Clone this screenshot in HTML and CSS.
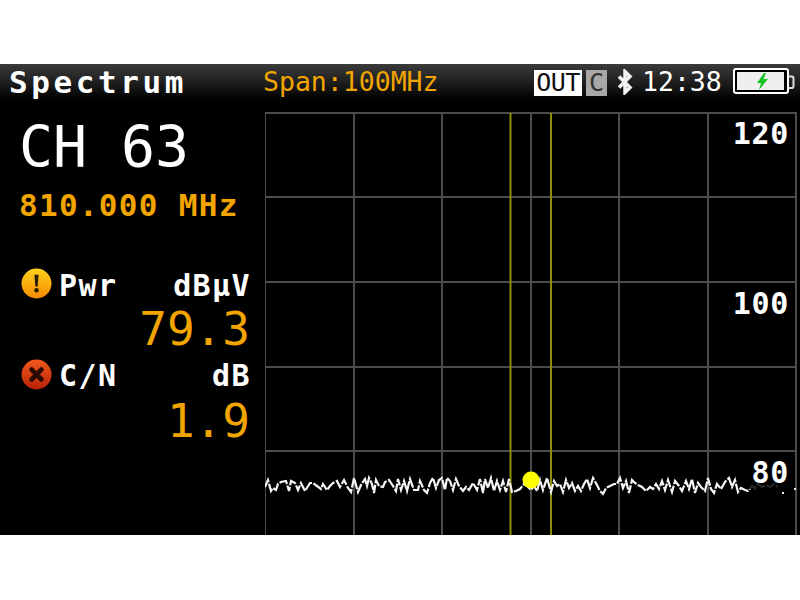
FILE: index.html
```html
<!DOCTYPE html>
<html lang="en">
<head>
  <meta charset="UTF-8">
  <title>Spectrum</title>
  <link rel="stylesheet" href="styles.css">
</head>
<body>
  <div class="screen">
    <div class="topbar">
      <div class="mode">Spectrum</div>
      <div class="span">Span:100MHz</div>
      <div class="status">
        <span class="badge badge-out">OUT</span>
        <span class="badge badge-c">C</span>
        <svg class="bt-icon" width="16" height="26" viewBox="0 0 16 26">
          <path d="M2 7.500 L13 18.500 L8 23.500 V2.500 L13 7.500 L2 18.500" fill="none" stroke="#f2f2f2" stroke-width="3.500"/>
        </svg>
        <span class="clock">12:38</span>
        <svg class="battery" width="62" height="27" viewBox="0 0 62 27">
          <rect x="1" y="1" width="54" height="24" rx="2" fill="#000" stroke="#fff" stroke-width="2"/>
          <rect x="4" y="4" width="47" height="18" fill="#efefef"/>
          <path d="M56 8.500 H59 Q60.500 8.500 60.500 10.500 V18 Q60.500 20 59 20 H56" fill="none" stroke="#ddd" stroke-width="2"/>
          <path d="M31 5 L24 15 H28 L26 22 L35 11 H30.500 L33 5 Z" fill="#18c422"/>
        </svg>
      </div>
    </div>

    <div class="main">
      <div class="readout">
        <div class="channel">CH 63</div>
        <div class="freq">810.000 MHz</div>

        <div class="measure measure-pwr">
          <svg class="state-icon" width="31" height="31" viewBox="0 0 32 32">
            <defs>
              <linearGradient id="warnFill" x1="0" y1="0" x2="0" y2="1">
                <stop offset="0" stop-color="#ffd21c"/>
                <stop offset="1" stop-color="#f58a04"/>
              </linearGradient>
            </defs>
            <circle cx="16" cy="16" r="15.500" fill="url(#warnFill)"/>
            <path d="M13.800 7 H18.200 L17.200 19 H14.800 Z" fill="#2a1c00"/>
            <circle cx="16" cy="23" r="2.300" fill="#2a1c00"/>
          </svg>
          <span class="measure-name">Pwr</span>
          <span class="measure-unit">dBµV</span>
        </div>
        <div class="measure-value">79.3</div>

        <div class="measure measure-cn">
          <svg class="state-icon" width="31" height="31" viewBox="0 0 32 32">
            <defs>
              <linearGradient id="errFill" x1="0" y1="0" x2="0" y2="1">
                <stop offset="0" stop-color="#f25a1c"/>
                <stop offset="1" stop-color="#b82008"/>
              </linearGradient>
            </defs>
            <circle cx="16" cy="16" r="15.500" fill="url(#errFill)"/>
            <path d="M11 11 L21 21 M21 11 L11 21" stroke="#2a0a04" stroke-width="5" stroke-linecap="round"/>
          </svg>
          <span class="measure-name">C/N</span>
          <span class="measure-unit">dB</span>
        </div>
        <div class="measure-value">1.9</div>
      </div>

      <div class="chart">
        <svg class="plot" width="535" height="435" viewBox="265 100 535 435">
          <g stroke="#4c4c4c" stroke-width="2" fill="none">
            <path d="M265 535 V113 H797"/>
            <path d="M354 113 V535 M442 113 V535 M531 113 V535 M619 113 V535 M708 113 V535 M796 113 V535"/>
            <path d="M265 197 H797 M265 282 H797 M265 367 H797 M265 451 H797"/>
          </g>
          <path d="M510.500 113 V535 M551 113 V535" stroke="#8f8c00" stroke-width="2"/>
          <polyline class="trace" points="265,487 268,480 271,491 273,488 276,490 278,484 281,482 286,481 289,491 291,481 295,483 298,490 301,483 305,491 310,483 313,483 317,486 321,489 323,484 327,490 330,486 333,483 337,481 340,487 344,480 348,488 351,492 354,478 358,492 361,485 365,479 367,486 369,478 372,484 374,493 376,480 379,486 383,487 385,482 389,480 393,486 396,491 398,479 401,490 404,481 407,491 410,479 414,490 418,490 420,481 424,490 427,493 430,483 433,478 436,488 439,480 442,478 445,490 447,478 450,481 453,490 456,479 459,486 463,491 466,487 469,490 473,483 477,490 480,479 483,493 485,479 488,488 491,478 494,491 497,481 500,490 503,481 506,492 509,479 512,492 516,491 520,489 524,484 527,486 531,490 534,486 537,491 540,480 543,490 547,478 551,492 554,481 557,486 560,484 563,492 566,480 569,488 572,483 575,491 578,486 581,491 584,484 587,479 590,488 593,478 597,485 600,491 603,494 606,488 610,486 614,484 617,484 620,478 623,488 626,481 629,493 632,480 635,483 638,485 642,487 646,491 650,487 653,489 656,484 659,489 662,481 665,490 668,480 672,492 675,481 679,486 682,491 686,481 689,489 692,479 695,493 698,483 701,487 705,491 708,478 711,489 714,493 717,484 721,489 725,482 729,478 732,487 735,480 738,492 741,488 745,490 748,491 752,486 755,488 758,484 762,487 766,485 770,487 774,484 778,487"/>
          <path d="M783 492 V494 M795 488 V490" stroke="#e8e8e8" stroke-width="2"/>
          <circle cx="531" cy="480" r="8.500" fill="#ffff00"/>
        </svg>
        <div class="scale scale-120">120</div>
        <div class="scale scale-100">100</div>
        <div class="scale scale-80">80</div>
      </div>
    </div>
  </div>
</body>
</html>
```

FILE: styles.css
```css
* {
  margin: 0;
  padding: 0;
  box-sizing: border-box;
}

body {
  background: #fff;
  font-family: 'DejaVu Sans Mono', monospace;
  overflow: hidden;
}

.screen {
  margin-top: 64px;
  width: 800px;
  height: 471px;
  background: #000;
  display: flex;
  flex-direction: column;
  color: #fff;
}

.topbar {
  height: 36px;
  display: flex;
  align-items: center;
  flex-shrink: 0;
  padding-left: 9px;
  background: linear-gradient(180deg, #3a3a3a 0%, #1c1c1c 55%, #000 100%);
}

.mode {
  width: 254px;
  font-size: 31px;
  font-weight: 700;
  letter-spacing: 3.600px;
  line-height: 36px;
}

.span {
  width: 271px;
  font-size: 26.500px;
  color: #f2a500;
  line-height: 36px;
}

.status {
  display: flex;
  align-items: center;
}

.badge {
  height: 26px;
  font-size: 25px;
  line-height: 26px;
  text-align: center;
  color: #111;
  margin-top: 2px;
}

.badge-out {
  width: 48px;
  background: #fff;
  letter-spacing: -0.500px;
}

.badge-c {
  width: 21px;
  margin-left: 4px;
  background: #a8a8a8;
  color: #333;
}

.bt-icon {
  margin-left: 10px;
}

.clock {
  margin-left: 9px;
  font-size: 26.500px;
  line-height: 36px;
}

.battery {
  margin-left: 11px;
  margin-top: -2px;
}

.main {
  flex: 1;
  display: flex;
  min-height: 0;
}

.readout {
  width: 265px;
  flex-shrink: 0;
  padding: 13px 15px 0 19px;
}

.channel {
  font-size: 56.500px;
  line-height: 70px;
}

.freq {
  font-size: 31px;
  font-weight: 700;
  letter-spacing: 1.300px;
  line-height: 38px;
  color: #f2a500;
  margin-top: 3px;
}

.measure {
  display: flex;
  align-items: center;
  height: 32px;
  font-size: 30px;
  font-weight: 700;
  letter-spacing: 1.400px;
}

.measure-pwr {
  margin-top: 43px;
}

.measure-pwr span {
  padding-top: 4px;
}

.measure-cn .state-icon {
  margin-top: -2px;
}

.state-icon {
  margin-left: 2px;
  margin-right: 7px;
  flex-shrink: 0;
}

.measure-unit {
  margin-left: auto;
  margin-right: -1px;
}

.measure-value {
  text-align: right;
  font-size: 46px;
  line-height: 60px;
  height: 60px;
  color: #f2a500;
}

.chart {
  flex: 1;
  position: relative;
  overflow: hidden;
}

.plot {
  display: block;
}

.trace {
  fill: none;
  stroke: #f6f6f6;
  stroke-width: 2.200;
  stroke-dasharray: 10 1.500;
}

.scale {
  position: absolute;
  right: 11px;
  padding-left: 4px;
  font-size: 30px;
  font-weight: 700;
  letter-spacing: 0.700px;
  line-height: 32px;
  background: rgba(0, 0, 0, 0.85);
}

.scale-120 {
  top: 18px;
}

.scale-100 {
  top: 188px;
}

.scale-80 {
  top: 357px;
}
```
